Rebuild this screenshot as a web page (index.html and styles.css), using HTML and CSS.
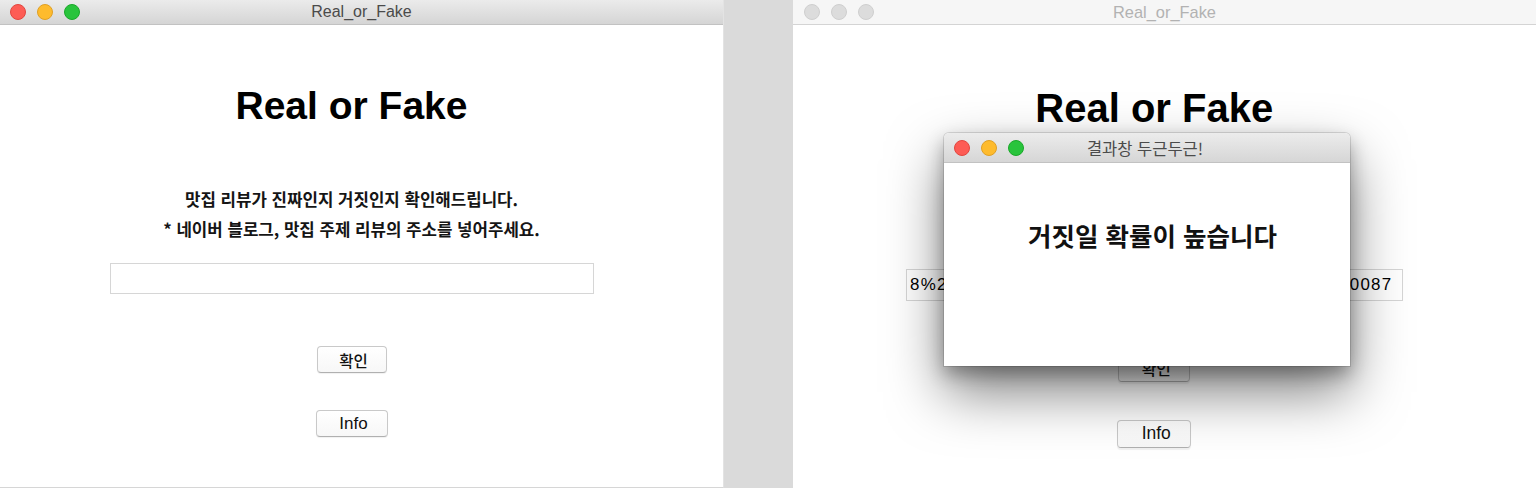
FILE: index.html
```html
<!DOCTYPE html>
<html lang="ko">
<head>
<meta charset="utf-8">
<title>Real_or_Fake</title>
<link rel="stylesheet" href="styles.css">
</head>
<body>
<div class="screen">
  <div class="window win-active">
    <div class="titlebar">
      <div class="lights">
        <span class="light red"></span><span class="light yellow"></span><span class="light green"></span>
      </div>
      <div class="title">Real_or_Fake</div>
      <div></div>
    </div>
    <div class="content">
      <h1 class="heading">Real or Fake</h1>
      <p class="desc">맛집 리뷰가 진짜인지 거짓인지 확인해드립니다.<br>* 네이버 블로그, 맛집 주제 리뷰의 주소를 넣어주세요.</p>
      <div class="field"></div>
      <button class="btn btn-ok">확인</button>
      <button class="btn btn-info">Info</button>
    </div>
  </div>

  <div class="window win-inactive">
    <div class="titlebar">
      <div class="lights">
        <span class="light off"></span><span class="light off"></span><span class="light off"></span>
      </div>
      <div class="title">Real_or_Fake</div>
      <div></div>
    </div>
    <div class="content">
      <h1 class="heading">Real or Fake</h1>
      <p class="desc desc-covered">맛집 리뷰가 진짜인지 거짓인지 확인해드립니다.<br>* 네이버 블로그, 맛집 주제 리뷰의 주소를 넣어주세요.</p>
      <div class="field field-filled"><span>8%2</span><span>0087</span></div>
      <button class="btn btn-ok">확인</button>
      <button class="btn btn-info">Info</button>
    </div>

    <div class="dialog">
      <div class="dialog-bar">
        <div class="lights">
          <span class="light red"></span><span class="light yellow"></span><span class="light green"></span>
        </div>
        <div class="dialog-title">결과창 두근두근!</div>
        <div></div>
      </div>
      <div class="dialog-body">
        <p class="result">거짓일 확률이 높습니다</p>
      </div>
    </div>
  </div>
</div>
</body>
</html>
```

FILE: styles.css
```css
* { box-sizing: border-box; }

html, body {
  margin: 0;
  padding: 0;
}

body {
  width: 1536px;
  height: 488px;
  overflow: hidden;
  background: #dadada;
  font-family: "Liberation Sans", "Noto Sans CJK KR", sans-serif;
}

.screen {
  display: flex;
  gap: 69px;
  height: 488px;
}

.window {
  background: #ffffff;
  display: flex;
  flex-direction: column;
  height: 488px;
}

.win-active {
  width: 724px;
  border-right: 1px solid #e3e3e3;
  border-bottom: 1px solid #d6d6d6;
}

.win-inactive {
  width: 743px;
  position: relative;
}

.titlebar {
  height: 25px;
  flex: none;
  display: grid;
  grid-template-columns: 1fr auto 1fr;
  align-items: center;
  border-bottom: 1px solid #c2c2c2;
  background: linear-gradient(#ebebeb, #d5d5d5);
}

.win-inactive .titlebar {
  background: #f6f6f6;
  border-bottom: 1px solid #d4d4d4;
}

.lights {
  display: flex;
  gap: 11px;
  padding-left: 10px;
}

.win-inactive .lights {
  padding-left: 11px;
}

.light {
  width: 16px;
  height: 16px;
  border-radius: 50%;
  display: block;
}

.red { background: #fd5c55; border: 1px solid #e2463f; }
.yellow { background: #febb2d; border: 1px solid #e0a025; }
.green { background: #29c43c; border: 1px solid #1ba82a; }
.off { background: #dcdcdc; border: 1px solid #cfcfcf; }

.title {
  font-size: 16px;
  color: #4b4b4b;
  line-height: 24px;
}

.win-inactive .title {
  color: #b2b2b2;
  font-size: 16.4px;
}

.content {
  display: flex;
  flex-direction: column;
  align-items: center;
  padding-right: 20px;
}

.win-inactive .content {
  zoom: 1.026;
}

.heading {
  margin: 61px 0 0;
  font-size: 39px;
  line-height: 39px;
  font-weight: 700;
  color: #000;
}

.desc {
  margin: 59px 0 0;
  font-family: "Noto Sans CJK KR", sans-serif;
  font-size: 16.8px;
  line-height: 30px;
  font-weight: 700;
  text-align: center;
  color: #151515;
}

.desc-covered {
  visibility: hidden;
}

.field {
  margin-top: 19px;
  width: 484px;
  height: 31px;
  border: 1px solid #d6d6d6;
  background: #fff;
}

.field-filled {
  display: flex;
  justify-content: space-between;
  align-items: center;
  padding: 0 9px 0 3px;
  font-size: 16.5px;
  letter-spacing: 1.2px;
  color: #000;
}

.btn {
  display: block;
  height: 27px;
  padding: 0 0 0 4px;
  background: linear-gradient(#ffffff, #f7f7f7);
  border: 1px solid #c9c9c9;
  border-bottom-color: #b0b0b0;
  border-radius: 4px;
  box-shadow: 0 1px 1px rgba(0, 0, 0, 0.06);
  font-family: "Liberation Sans", "Noto Sans CJK KR", sans-serif;
  color: #111;
}

.btn-ok {
  margin-top: 52px;
  width: 70px;
  font-size: 15.5px;
  font-weight: 500;
}

.btn-info {
  margin-top: 37px;
  width: 72px;
  font-size: 17px;
}

.dialog {
  position: absolute;
  left: 151px;
  top: 133px;
  width: 406px;
  height: 233px;
  display: flex;
  flex-direction: column;
  background: #fff;
  border-radius: 5px 5px 0 0;
  box-shadow: 0 0 0 1px rgba(0, 0, 0, 0.12), 0 26px 55px rgba(0, 0, 0, 0.5), 0 8px 18px rgba(0, 0, 0, 0.3);
  overflow: hidden;
}

.dialog-bar {
  height: 30px;
  flex: none;
  display: grid;
  grid-template-columns: 1fr auto 1fr;
  align-items: center;
  background: linear-gradient(#ececec, #d6d6d6);
  border-bottom: 1px solid #c2c2c2;
}

.dialog-bar .lights {
  padding-left: 10px;
}

.dialog-title {
  font-family: "Noto Sans CJK KR", sans-serif;
  font-size: 16.5px;
  color: #4b4b4b;
  padding-right: 4px;
}

.dialog-body {
  flex: 1;
  display: flex;
  justify-content: center;
  padding-left: 11px;
}

.result {
  margin: 57px 0 0;
  font-family: "Noto Sans CJK KR", sans-serif;
  font-size: 25.5px;
  line-height: 30px;
  font-weight: 700;
  color: #111;
}
```
